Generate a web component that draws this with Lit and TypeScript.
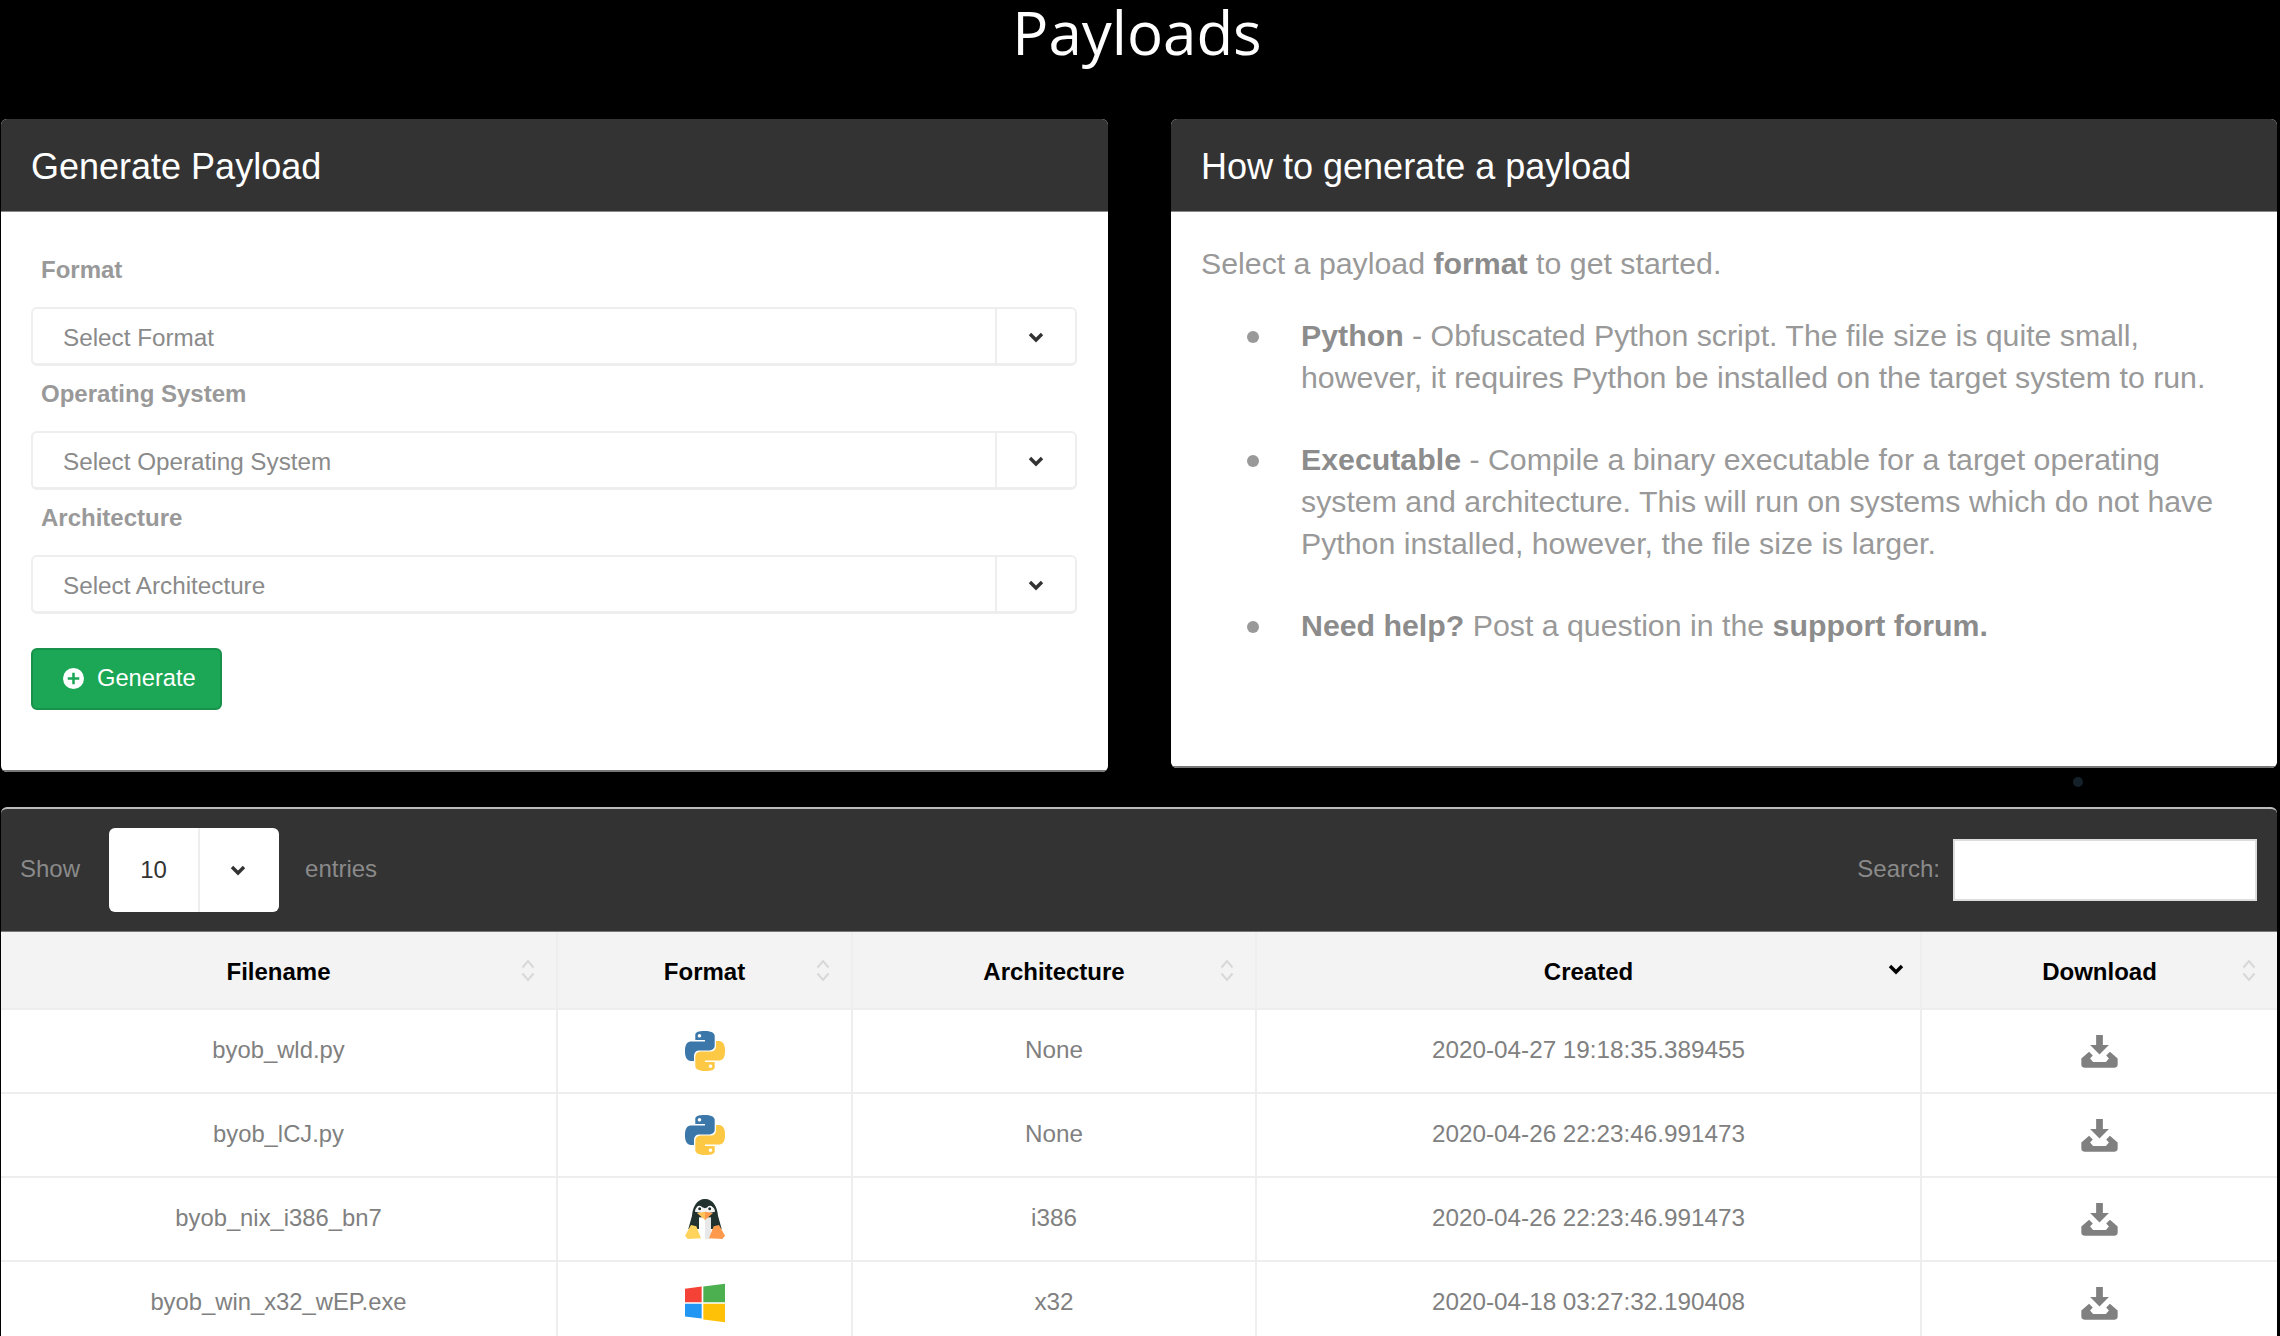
import { LitElement, html, css } from "lit";
import { customElement } from "lit/decorators.js";

const chevron = html`<svg class="chev" viewBox="0 0 16 11"><path d="M2 2l6 6 6-6" fill="none" stroke="currentColor" stroke-width="3.4"/></svg>`;

const sortIcon = html`<svg class="sort" viewBox="0 0 14 23"><path d="M1.5 8.5L7 2l5.5 6.5M1.5 14.5L7 21l5.5-6.5" fill="none" stroke="#d8d8d8" stroke-width="2"/></svg>`;

const python = html`<svg class="fmt" viewBox="0 0 24 24">
  <path fill="#3c77a9" fill-rule="evenodd" d="M14.25.18l.9.2.73.26.59.3.45.32.34.34.25.34.16.33.1.3.04.26.02.2-.01.13V8.5l-.05.63-.13.55-.21.46-.26.38-.3.31-.33.25-.35.19-.35.14-.33.1-.3.07-.26.04-.21.02H8.77l-.69.05-.59.14-.5.22-.41.27-.33.32-.27.35-.2.36-.15.37-.1.35-.07.32-.04.27-.02.21v3.06H3.17l-.21-.03-.28-.07-.32-.12-.35-.18-.36-.26-.36-.36-.35-.46-.32-.59-.28-.73-.21-.88-.14-1.05-.05-1.23.06-1.22.16-1.04.24-.87.32-.71.36-.57.4-.44.42-.33.42-.24.4-.16.36-.1.32-.05.24-.01h.16l.06.01h8.16v-.83H6.18l-.01-2.75-.02-.37.05-.34.11-.31.17-.28.25-.26.31-.23.38-.2.44-.18.51-.15.58-.12.64-.1.71-.06.77-.04.84-.02 1.27.05zm-6.3 1.98l-.23.33-.08.41.08.41.23.34.33.22.41.09.41-.09.33-.22.23-.34.08-.41-.08-.41-.23-.33-.33-.22-.41-.09-.41.09z"/>
  <path fill="#fdc945" fill-rule="evenodd" d="M21.04 6.11l.28.06.32.12.35.18.36.27.36.35.35.47.32.59.28.73.21.88.14 1.04.05 1.23-.06 1.23-.16 1.04-.24.86-.32.71-.36.57-.4.45-.42.33-.42.24-.4.16-.36.09-.32.05-.24.02-.16-.01h-8.22v.82h5.84l.01 2.76.02.36-.05.34-.11.31-.17.29-.25.25-.31.24-.38.2-.44.17-.51.15-.58.13-.64.09-.71.07-.77.04-.84.01-1.27-.04-1.07-.14-.9-.2-.73-.25-.59-.3-.45-.33-.34-.34-.25-.34-.16-.33-.1-.3-.04-.25-.02-.2.01-.13v-5.34l.05-.64.13-.54.21-.46.26-.38.3-.32.33-.24.35-.2.35-.14.33-.1.3-.06.26-.04.21-.02.13-.01h5.84l.69-.05.59-.14.5-.21.41-.28.33-.32.27-.35.2-.36.15-.36.1-.35.07-.32.04-.28.02-.21V6.07h2.09l.14.01zm-6.47 14.25l-.23.33-.08.41.08.41.23.33.33.23.41.08.41-.08.33-.23.23-.33.08-.41-.08-.41-.23-.33-.33-.23-.41-.08-.41.08z"/>
</svg>`;

const penguin = html`<svg class="fmt" viewBox="0 0 120 120">
  <path fill="#22332f" d="M60 0C85 0 97 25 99 50L110 90H10L21 50C23 25 35 0 60 0z"/>
  <path fill="#fff" d="M42 55h18v65H42z"/>
  <path fill="#e8e8e8" d="M60 55h18v65H60z"/>
  <path fill="#ffd35c" d="M0 110L18 78l16 4 14 36-40 2z"/>
  <path fill="#ff9a4d" d="M120 110L102 78l-16 4-14 36 40 2z"/>
  <path fill="#f2f2f2" d="M30 38c0-12 12-18 20-14l10 4 10-4c8-4 20 2 20 14l-30 6z"/>
  <circle cx="43" cy="28" r="8" fill="#fff"/>
  <circle cx="75" cy="28" r="8" fill="#fff"/>
  <circle cx="44" cy="29" r="4.5" fill="#22332f"/>
  <circle cx="74" cy="29" r="4.5" fill="#22332f"/>
  <path fill="#ffc25c" d="M36 42l24-4v25z"/>
  <path fill="#ff9a4d" d="M84 42l-24-4v25z"/>
</svg>`;

const windows = html`<svg class="fmt" viewBox="0 0 120 115">
  <path fill="#f44336" d="M0 15L50 8v47H0z"/>
  <path fill="#4caf50" d="M55 8L120 0v55H55z"/>
  <path fill="#2196f3" d="M0 60h50v44L0 98z"/>
  <path fill="#ffc107" d="M55 60h65v55l-65-8z"/>
</svg>`;

const download = html`<svg class="dl" viewBox="0 0 110 98">
  <path fill="#808080" d="M45 0h20v30h18L55 58 27 30h18z"/>
  <path fill="#808080" d="M1 70L24 50l11 11-8 9 9 10h38l9-10-8-9 11-11 23 20v18q0 9-9 9H10q-9 0-9-9z"/>
</svg>`;

const icons: Record<string, unknown> = { python, linux: penguin, windows };

const rows = [
  { name: "byob_wld.py", fmt: "python", arch: "None", created: "2020-04-27 19:18:35.389455" },
  { name: "byob_lCJ.py", fmt: "python", arch: "None", created: "2020-04-26 22:23:46.991473" },
  { name: "byob_nix_i386_bn7", fmt: "linux", arch: "i386", created: "2020-04-26 22:23:46.991473" },
  { name: "byob_win_x32_wEP.exe", fmt: "windows", arch: "x32", created: "2020-04-18 03:27:32.190408" },
];

const fields = [
  { label: "Format", hint: "Select Format" },
  { label: "Operating System", hint: "Select Operating System" },
  { label: "Architecture", hint: "Select Architecture" },
];

@customElement("app-root")
export class AppRoot extends LitElement {
  static styles = css`
    :host {
      display: block;
      position: relative;
      box-sizing: border-box;
      width: 2280px;
      height: 1336px;
      padding-left: 1px;
      overflow: hidden;
      background: #000;
      font-family: "Liberation Sans", Arial, sans-serif;
      font-size: 24px;
      color: #8a8a8a;
    }
    .title {
      height: 119px;
      margin: 0;
      padding-right: 7px;
      text-align: center;
      color: #fff;
      font: 400 60px/64px "Open Sans", sans-serif;
    }
    .panels {
      display: grid;
      grid-template-columns: 1107px 1106px;
      gap: 63px;
      align-items: start;
      height: 652px;
      margin-bottom: 36px;
    }
    .card {
      background: #fff;
      border-radius: 6px;
      overflow: hidden;
    }
    .card-head {
      box-sizing: border-box;
      height: 93px;
      padding-left: 30px;
      background: #333;
      color: #fff;
      font-size: 36px;
      line-height: 95px;
      border-bottom: 1px solid #888;
    }
    .form {
      box-sizing: border-box;
      height: 560px;
      padding: 30px 30px 0;
      border-bottom: 2px solid #777;
    }
    .label {
      height: 65px;
      padding-left: 10px;
      font-weight: 700;
      line-height: 56px;
      color: #999;
    }
    .select {
      box-sizing: border-box;
      display: flex;
      height: 59px;
      width: 1046px;
      border: 2px solid #eee;
      border-bottom-width: 3px;
      border-radius: 6px;
      font-size: 24.25px;
      line-height: 57px;
    }
    .select .value {
      flex: 1;
      padding-left: 30px;
    }
    .select .arrow {
      display: flex;
      align-items: center;
      justify-content: center;
      width: 78px;
      padding-top: 2px;
      border-left: 2px solid #eee;
      color: #333;
    }
    .chev {
      display: block;
      width: 16px;
      height: 11px;
    }
    .btn {
      box-sizing: border-box;
      display: flex;
      align-items: center;
      gap: 13px;
      width: 191px;
      height: 62px;
      margin-top: 34px;
      padding: 0 0 2px 30px;
      background: #1ba755;
      border: 2px solid #18914a;
      border-radius: 6px;
      color: #fff;
      font-size: 23.7px;
    }
    .btn svg {
      width: 21px;
      height: 21px;
    }
    .help {
      box-sizing: border-box;
      height: 556px;
      padding: 31px 30px 0;
      font-size: 30.3px;
      line-height: 42px;
      border-bottom: 2px solid #777;
      color: #999;
    }
    .help p {
      margin: 0 0 30px;
    }
    .help ul {
      margin: 0;
      padding: 0 0 0 100px;
      list-style: none;
    }
    .help li {
      position: relative;
      margin-bottom: 40px;
    }
    .help li::before {
      content: "";
      position: absolute;
      left: -54px;
      top: 16px;
      width: 12px;
      height: 12px;
      border-radius: 50%;
      background: #999;
    }
    .help b {
      color: #8c8c8c;
    }
    .dot {
      position: absolute;
      left: 2073px;
      top: 777px;
      width: 10px;
      height: 10px;
      border-radius: 50%;
      background: #14212a;
    }
    .entries {
      width: 2276px;
      border-top: 2px solid #bbb;
      border-radius: 6px 6px 0 0;
      overflow: hidden;
      background: #fff;
    }
    .toolbar {
      display: flex;
      align-items: center;
      height: 123px;
      padding: 0 20px 2px 19px;
      background: #333;
      border-bottom: 1px solid #777;
      box-sizing: border-box;
    }
    .len {
      display: flex;
      width: 170px;
      height: 84px;
      margin: 2px 26px 0 29px;
      background: #fff;
      border-radius: 6px;
      color: #333;
      line-height: 84px;
    }
    .len .value {
      width: 89px;
      text-align: center;
    }
    .len .arrow {
      display: flex;
      align-items: center;
      justify-content: center;
      flex: 1;
      padding-right: 3px;
      border-left: 2px solid #eee;
    }
    .spacer {
      flex: 1;
    }
    .search {
      box-sizing: border-box;
      width: 304px;
      height: 62px;
      margin: 2px 0 0 13px;
      background: #fff;
      border: 2px solid #ddd;
    }
    table {
      width: 2276px;
      table-layout: fixed;
      border-collapse: collapse;
    }
    th {
      position: relative;
      height: 73px;
      padding: 3px 0 0;
      background: #f3f3f3;
      color: #000;
      font-weight: 700;
      border-right: 2px solid #eee;
      border-bottom: 2px solid #eee;
    }
    td {
      height: 79px;
      padding: 0 0 3px;
      text-align: center;
      font-size: 24.25px;
      color: #808080;
      border-right: 2px solid #eee;
      border-bottom: 2px solid #eee;
    }
    td.name {
      font-size: 23.8px;
    }
    td.icon {
      height: 82px;
      padding: 0;
    }
    th:last-child,
    td:last-child {
      border-right: 0;
    }
    .sort {
      position: absolute;
      right: 21px;
      top: 27px;
      width: 14px;
      height: 23px;
    }
    .sort-on {
      position: absolute;
      right: 16px;
      top: 32px;
      color: #000;
    }
    .fmt {
      display: block;
      width: 40px;
      height: 40px;
      margin: 0 auto;
    }
    .dl {
      display: block;
      width: 37px;
      height: 33px;
      margin: 0 auto;
    }
  `;

  render() {
    return html`
      <h1 class="title">Payloads</h1>
      <div class="panels">
        <section class="card">
          <div class="card-head">Generate Payload</div>
          <div class="form">
            ${fields.map(
              (f) => html`
                <div class="label">${f.label}</div>
                <div class="select">
                  <span class="value">${f.hint}</span>
                  <span class="arrow">${chevron}</span>
                </div>
              `
            )}
            <div class="btn">
              <svg viewBox="0 0 20 20">
                <circle cx="10" cy="10" r="10" fill="#fff" />
                <path d="M10 4.5v11M4.5 10h11" stroke="#1ba755" stroke-width="2.4" />
              </svg>
              Generate
            </div>
          </div>
        </section>
        <section class="card">
          <div class="card-head">How to generate a payload</div>
          <div class="help">
            <p>Select a payload <b>format</b> to get started.</p>
            <ul>
              <li>
                <b>Python</b> - Obfuscated Python script. The file size is quite small, however, it
                requires Python be installed on the target system to run.
              </li>
              <li>
                <b>Executable</b> - Compile a binary executable for a target operating system and
                architecture. This will run on systems which do not have Python installed, however,
                the file size is larger.
              </li>
              <li><b>Need help?</b> Post a question in the <b>support forum.</b></li>
            </ul>
          </div>
        </section>
      </div>
      <div class="dot"></div>
      <section class="entries">
        <div class="toolbar">
          <span>Show</span>
          <div class="len">
            <span class="value">10</span>
            <span class="arrow">${chevron}</span>
          </div>
          <span>entries</span>
          <span class="spacer"></span>
          <span>Search:</span>
          <div class="search"></div>
        </div>
        <table>
          <colgroup>
            <col style="width:556px" />
            <col style="width:295px" />
            <col style="width:404px" />
            <col style="width:665px" />
            <col style="width:356px" />
          </colgroup>
          <thead>
            <tr>
              <th>Filename${sortIcon}</th>
              <th>Format${sortIcon}</th>
              <th>Architecture${sortIcon}</th>
              <th>Created<span class="sort-on">${chevron}</span></th>
              <th>Download${sortIcon}</th>
            </tr>
          </thead>
          <tbody>
            ${rows.map(
              (r) => html`
                <tr>
                  <td class="name">${r.name}</td>
                  <td class="icon">${icons[r.fmt]}</td>
                  <td>${r.arch}</td>
                  <td>${r.created}</td>
                  <td class="icon">${download}</td>
                </tr>
              `
            )}
          </tbody>
        </table>
      </section>
    `;
  }
}
